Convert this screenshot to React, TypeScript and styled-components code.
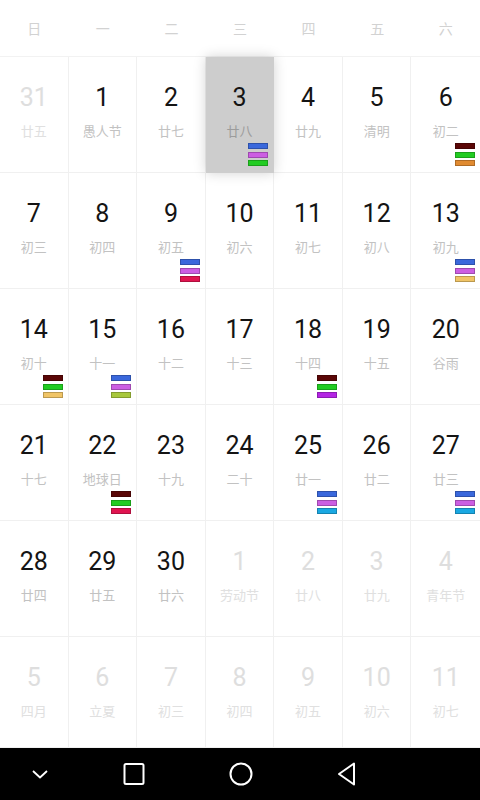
import React from 'react';
import styled, { createGlobalStyle, css } from 'styled-components';

const GlobalStyle = createGlobalStyle`
    html, body {
        margin: 0;
        padding: 0;
        background: #fff;
    }
    body {
        font-family: Roboto, "Noto Sans CJK SC", sans-serif;
    }
`;

const Screen = styled.div`
    width: 480px;
    height: 800px;
    display: flex;
    flex-direction: column;
    background: #fff;
    overflow: hidden;
`;

const WeekHeader = styled.div`
    height: 56px;
    display: grid;
    grid-template-columns: repeat(7, 1fr);
    align-items: center;
    flex-shrink: 0;
`;

const WeekLabel = styled.div`
    text-align: center;
    font-family: "Noto Sans CJK SC", sans-serif;
    font-size: 14px;
    color: #d2d2d2;
`;

const MonthGrid = styled.div`
    flex: 1;
    display: grid;
    grid-template-columns: repeat(7, 1fr);
    grid-template-rows: repeat(5, 116px) 1fr;
    border-top: 1px solid #f2f2f2;
    min-height: 0;
`;

const DayCell = styled.div<{ $selected?: boolean }>`
    display: flex;
    flex-direction: column;
    align-items: center;
    border-right: 1px solid #f0f0f0;
    border-bottom: 1px solid #f0f0f0;
    min-width: 0;
    position: relative;
    &:nth-child(7n) {
        border-right: none;
    }
    ${(p) =>
        p.$selected &&
        css`
            background: #cdcdcd;
            box-shadow: 0 0 12px rgba(0, 0, 0, 0.18);
            z-index: 1;
            border-color: #cdcdcd;
        `}
`;

const DayNumber = styled.div<{ $faded?: boolean }>`
    margin-top: 26px;
    font-size: 25px;
    line-height: 30px;
    color: ${(p) => (p.$faded ? '#dedede' : '#141414')};
`;

const LunarText = styled.div<{ $faded?: boolean; $onGray?: boolean }>`
    margin-top: 9px;
    font-family: "Noto Sans CJK SC", sans-serif;
    font-size: 13px;
    line-height: 18px;
    color: ${(p) => (p.$onGray ? '#9c9c9c' : p.$faded ? '#e0e0e0' : '#c2c2c2')};
`;

const EventStack = styled.div`
    margin-top: auto;
    align-self: flex-end;
    margin-right: 5px;
    margin-bottom: 6px;
    display: flex;
    flex-direction: column;
    gap: 2.5px;
`;

const EventBar = styled.div<{ $color: string }>`
    width: 20px;
    height: 6px;
    box-sizing: border-box;
    background: ${(p) => p.$color};
    border: 1px solid rgba(0, 0, 0, 0.22);
`;

const NavBar = styled.div`
    height: 52px;
    flex-shrink: 0;
    background: #000;
    display: flex;
    align-items: center;
`;

const NavButton = styled.div<{ $width: number }>`
    width: ${(p) => p.$width}px;
    display: flex;
    justify-content: center;
    align-items: center;
`;

const C = {
    blue: '#3a68dc',
    purple: '#cc5ee2',
    green: '#22cc22',
    maroon: '#5a0606',
    orange: '#e08a30',
    crimson: '#e01450',
    yellow: '#f0c466',
    olive: '#a8c83c',
    violet: '#b424e4',
    cyan: '#1aa8e2',
};

type Day = {
    num: number;
    lunar: string;
    faded?: boolean;
    selected?: boolean;
    events?: string[];
};

const weekdays = ['日', '一', '二', '三', '四', '五', '六'];

const days: Day[] = [
    { num: 31, lunar: '廿五', faded: true },
    { num: 1, lunar: '愚人节' },
    { num: 2, lunar: '廿七' },
    { num: 3, lunar: '廿八', selected: true, events: [C.blue, C.purple, C.green] },
    { num: 4, lunar: '廿九' },
    { num: 5, lunar: '清明' },
    { num: 6, lunar: '初二', events: [C.maroon, C.green, C.orange] },

    { num: 7, lunar: '初三' },
    { num: 8, lunar: '初四' },
    { num: 9, lunar: '初五', events: [C.blue, C.purple, C.crimson] },
    { num: 10, lunar: '初六' },
    { num: 11, lunar: '初七' },
    { num: 12, lunar: '初八' },
    { num: 13, lunar: '初九', events: [C.blue, C.purple, C.yellow] },

    { num: 14, lunar: '初十', events: [C.maroon, C.green, C.yellow] },
    { num: 15, lunar: '十一', events: [C.blue, C.purple, C.olive] },
    { num: 16, lunar: '十二' },
    { num: 17, lunar: '十三' },
    { num: 18, lunar: '十四', events: [C.maroon, C.green, C.violet] },
    { num: 19, lunar: '十五' },
    { num: 20, lunar: '谷雨' },

    { num: 21, lunar: '十七' },
    { num: 22, lunar: '地球日', events: [C.maroon, C.green, C.crimson] },
    { num: 23, lunar: '十九' },
    { num: 24, lunar: '二十' },
    { num: 25, lunar: '廿一', events: [C.blue, C.purple, C.cyan] },
    { num: 26, lunar: '廿二' },
    { num: 27, lunar: '廿三', events: [C.blue, C.purple, C.cyan] },

    { num: 28, lunar: '廿四' },
    { num: 29, lunar: '廿五' },
    { num: 30, lunar: '廿六' },
    { num: 1, lunar: '劳动节', faded: true },
    { num: 2, lunar: '廿八', faded: true },
    { num: 3, lunar: '廿九', faded: true },
    { num: 4, lunar: '青年节', faded: true },

    { num: 5, lunar: '四月', faded: true },
    { num: 6, lunar: '立夏', faded: true },
    { num: 7, lunar: '初三', faded: true },
    { num: 8, lunar: '初四', faded: true },
    { num: 9, lunar: '初五', faded: true },
    { num: 10, lunar: '初六', faded: true },
    { num: 11, lunar: '初七', faded: true },
];

const navStroke = { fill: 'none', stroke: '#fff', strokeWidth: 2, strokeLinejoin: 'round' as const };

const App = () => {
    return (
        <>
            <GlobalStyle />
            <Screen>
                <WeekHeader>
                    {weekdays.map((w) => (
                        <WeekLabel key={w}>{w}</WeekLabel>
                    ))}
                </WeekHeader>
                <MonthGrid>
                    {days.map((d, i) => (
                        <DayCell key={i} $selected={d.selected}>
                            <DayNumber $faded={d.faded}>{d.num}</DayNumber>
                            <LunarText $faded={d.faded} $onGray={d.selected}>
                                {d.lunar}
                            </LunarText>
                            {d.events && (
                                <EventStack>
                                    {d.events.map((c, j) => (
                                        <EventBar key={j} $color={c} />
                                    ))}
                                </EventStack>
                            )}
                        </DayCell>
                    ))}
                </MonthGrid>
                <NavBar>
                    <NavButton $width={80}>
                        <svg width="20" height="12" viewBox="0 0 20 12">
                            <path d="M3 3 L10 9.5 L17 3" {...navStroke} strokeWidth={1.8} />
                        </svg>
                    </NavButton>
                    <NavButton $width={107}>
                        <svg width="24" height="24" viewBox="0 0 24 24">
                            <rect x="2.5" y="2" width="19" height="20" rx="1.5" {...navStroke} />
                        </svg>
                    </NavButton>
                    <NavButton $width={107}>
                        <svg width="26" height="26" viewBox="0 0 26 26">
                            <circle cx="13" cy="13" r="10.5" {...navStroke} />
                        </svg>
                    </NavButton>
                    <NavButton $width={107}>
                        <svg width="24" height="26" viewBox="0 0 24 26">
                            <path d="M18 2.5 L18 23.5 L3 13 Z" {...navStroke} />
                        </svg>
                    </NavButton>
                </NavBar>
            </Screen>
        </>
    );
};

export default App;
